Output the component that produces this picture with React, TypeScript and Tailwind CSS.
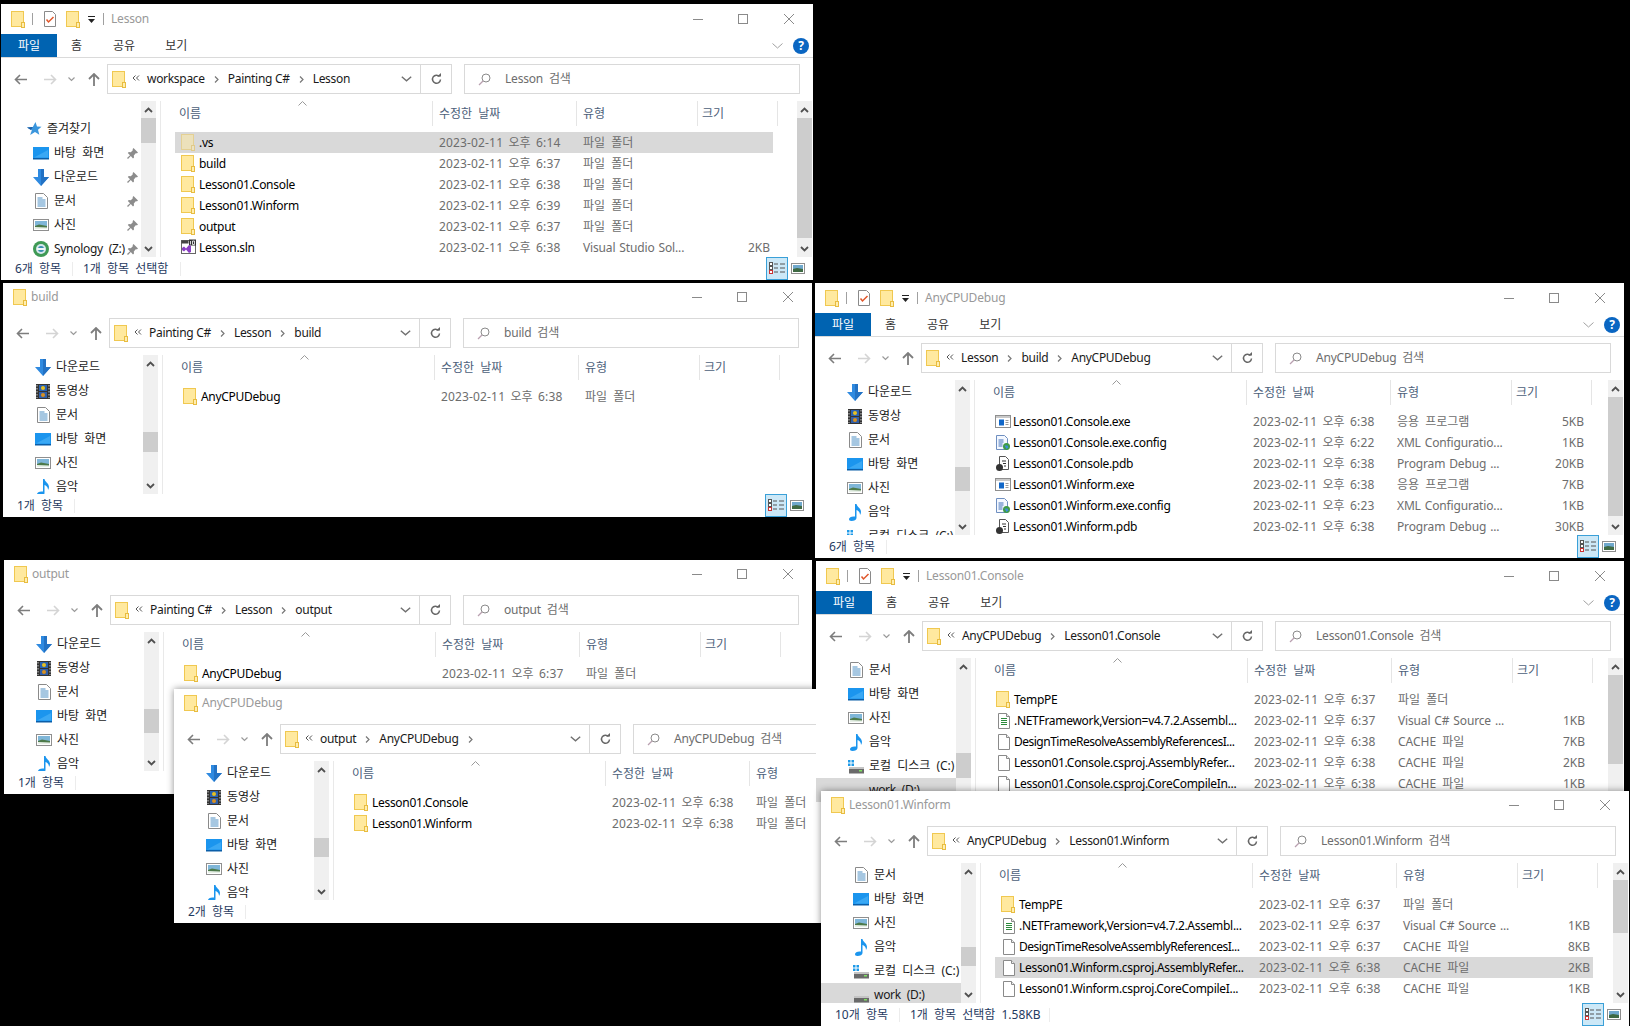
import type { ReactNode } from 'react';

type FileKind = 'folder' | 'hidden' | 'exe' | 'config' | 'pdb' | 'sln' | 'cs' | 'blank';
type NavKind = 'star' | 'desktop' | 'download' | 'doc' | 'photo' | 'video' | 'music' | 'synology' | 'diskC' | 'diskD';

type FileRow = { name: string; date?: string; type?: string; size?: string; kind: FileKind; selected?: boolean; tight?: boolean };
type NavRow = { label: string; kind: NavKind; pinned?: boolean; top?: boolean; selected?: boolean };

type WindowProps = {
  place: string;
  title: string;
  ribbon?: boolean;
  crumbs: string[];
  trailing?: boolean;
  search: string;
  nav: NavRow[];
  navShift: string;
  navThumb: [number, number];
  rows: FileRow[];
  listThumb?: [number, number];
  status: string;
  statusWidth?: string;
  status2?: string;
  status2Width?: string;
  raised?: boolean;
};

// latin strings run a bit narrower than Noto Sans in the reference
const latin = (s: string) => (/[가-힣]/.test(s) ? '' : 'tracking-[-0.3px]');
const latinType = (s: string) => (/[가-힣]/.test(s) ? '' : 'tracking-[-0.15px] [word-spacing:1px]');

const Folder = ({ faded }: { faded?: boolean }) => (
  <svg width="14" height="17" viewBox="0 0 14 17" className={faded ? 'shrink-0 opacity-50' : 'shrink-0'}>
    <rect x="0.5" y="0.5" width="12" height="15" fill="#ffe99f" stroke="#f0c850" />
    <rect x="10.5" y="11.5" width="3" height="5" fill="#ffeeb0" stroke="#e8bc40" />
  </svg>
);

const Page = ({ children }: { children?: ReactNode }) => (
  <svg width="16" height="18" viewBox="0 0 16 18" className="shrink-0">
    <path d="M2.5 1.5h8l3 3v12h-11z" fill="#fff" stroke="#8a8a8a" />
    <path d="M10.5 1.5v3h3" fill="#eee" stroke="#8a8a8a" />
    {children}
  </svg>
);

const FileIcon = ({ kind }: { kind: FileKind }) => {
  if (kind === 'folder') return <Folder />;
  if (kind === 'hidden') return <Folder faded />;
  if (kind === 'blank') return <Page />;
  if (kind === 'cs')
    return (
      <Page>
        <path d="M5 6.5h6M5 8.5h6M5 10.5h6M5 12.5h6" stroke="#2c8a3c" />
      </Page>
    );
  if (kind === 'exe')
    return (
      <svg width="16" height="14" viewBox="0 0 16 14" className="shrink-0">
        <rect x="0.5" y="0.5" width="15" height="12" fill="#fff" stroke="#8f8f8f" />
        <rect x="1" y="1" width="14" height="2" fill="#c9c9c9" />
        <rect x="4" y="4.5" width="5" height="6" fill="#1167c8" />
        <path d="M10.5 5.5h3M10.5 7.5h3M10.5 9.5h3" stroke="#9a9a9a" />
      </svg>
    );
  if (kind === 'config')
    return (
      <svg width="16" height="18" viewBox="0 0 16 18" className="shrink-0">
        <path d="M1.5 1.5h8l3 3v11h-11z" fill="#f4f8ff" stroke="#6f8fc0" />
        <path d="M3.5 6h5M3.5 8h5M3.5 10h4M3.5 12h4" stroke="#3e6fb8" />
        <circle cx="11.5" cy="12.5" r="3.5" fill="#3f9a45" />
        <path d="M9.5 11.5h3l1 2-2 1.5z" fill="#3b8fd8" />
      </svg>
    );
  if (kind === 'pdb')
    return (
      <svg width="16" height="18" viewBox="0 0 16 18" className="shrink-0">
        <path d="M4.5 1.5h6l3 3v10h-9z" fill="#fff" stroke="#555" />
        <path d="M7 6h4M8 8.500h3M9 11h2" stroke="#333" />
        <circle cx="4.500" cy="12.500" r="3.500" fill="#333" />
      </svg>
    );
  return (
    <svg width="16" height="17" viewBox="0 0 16 17" className="shrink-0">
      <rect x="0.500" y="1.500" width="14" height="13" fill="#fff" stroke="#666" />
      <rect x="0.500" y="1.500" width="7" height="3" fill="#444" />
      <rect x="8" y="0.500" width="7" height="6" fill="#333" />
      <path d="M9.500 2v3.500M11.500 2h2v3.500h-2z" stroke="#fff" fill="none" strokeWidth="0.800" />
      <path d="M1 9l2-1.500 2 2 3-3.500 2 1v6l-2 1-3-3.500-2 2-2-1.500z" fill="#8a3fc4" />
    </svg>
  );
};

const NavIcon = ({ kind }: { kind: NavKind }) => {
  switch (kind) {
    case 'star':
      return (
        <svg width="16" height="16" viewBox="0 0 16 16">
          <path d="M9.500 1l1.500 4.500 4.500.3-3.500 3 1.300 5-4.300-2.800-4.800 3 1.800-4.800L1 6.500l5.800-.6z" fill="#3a96dd" />
          <path d="M1 6.500l5.800-.6-2 3 1 .5-2 5 1.800-4.800z" fill="#1d5fa8" />
        </svg>
      );
    case 'desktop':
      return (
        <svg width="16" height="13" viewBox="0 0 16 13">
          <rect width="16" height="12" fill="#1b95ee" />
          <rect x="0" y="11" width="16" height="1.500" fill="#0b5ea8" />
          <path d="M1 10.500L15 3v7.500z" fill="#3aa8f4" />
        </svg>
      );
    case 'download':
      return (
        <svg width="16" height="17" viewBox="0 0 16 17">
          <path d="M5 0h6v8h5l-8 9-8-9h5z" fill="#2f8ae0" />
          <path d="M8 0h3v8h5l-8 9z" fill="#2372c4" />
        </svg>
      );
    case 'doc':
      return (
        <svg width="13" height="16" viewBox="0 0 13 16">
          <path d="M.5.500h8l4 4v11H.500z" fill="#fff" stroke="#8a8a8a" />
          <path d="M2.500 5h5M2.500 7h8M2.500 9h8M2.500 11h8M2.500 13h8" stroke="#4c8fc4" />
        </svg>
      );
    case 'photo':
      return (
        <svg width="16" height="13" viewBox="0 0 16 13">
          <rect x="0.500" y="0.500" width="15" height="11" fill="#fff" stroke="#8f8f8f" />
          <rect x="2" y="2" width="12" height="8" fill="#7fb6d8" />
          <path d="M2 7l4-1.500 8 1.500v3H2z" fill="#4d7a4a" />
          <path d="M2 8l12 .5V10H2z" fill="#e6efe6" />
        </svg>
      );
    case 'video':
      return (
        <svg width="14" height="15" viewBox="0 0 14 15">
          <rect width="14" height="15" fill="#333" />
          <path d="M1 1v13M13 1v13" stroke="#ccc" strokeDasharray="1.500 1.500" />
          <rect x="3" y="1" width="8" height="6" fill="#2a62b0" />
          <rect x="3" y="8" width="8" height="6" fill="#315fa8" />
          <circle cx="7" cy="4" r="2" fill="#e8c020" />
          <circle cx="7" cy="11" r="2" fill="#d89020" />
        </svg>
      );
    case 'music':
      return (
        <svg width="13" height="17" viewBox="0 0 13 17">
          <path d="M6 0h1.500c.3 3 4.500 4 4.500 8 0 1-.3 2-1 3 .2-3-2-4.500-3.500-5v8c0 2-2.500 3-5 3C.500 17 0 16 0 15c0-1.500 2.500-3 6-2.500z" fill="#1b95ee" />
        </svg>
      );
    case 'synology':
      return (
        <svg width="16" height="16" viewBox="0 0 16 16">
          <circle cx="8" cy="8" r="8" fill="#3f9a55" />
          <circle cx="8" cy="8" r="5" fill="#d7e6ee" />
          <circle cx="8" cy="8" r="3" fill="#3a8fb0" />
          <rect x="4" y="7" width="8" height="2" fill="#f0f6f8" />
        </svg>
      );
    case 'diskC':
      return (
        <svg width="16" height="15" viewBox="0 0 16 15">
          <path d="M0 1h2.500v2.500H0zM3.500 1H6v2.500H3.500zM0 4.500h2.500V7H0zM3.500 4.500H6V7H3.500z" fill="#1e9ae8" />
          <rect x="1" y="9" width="15" height="5.500" fill="#6a6a6a" />
          <rect x="1" y="8" width="15" height="2" fill="#c4c4c4" />
          <rect x="11" y="11" width="3" height="1.500" fill="#7fe060" />
        </svg>
      );
    default:
      return (
        <svg width="16" height="15" viewBox="0 0 16 15">
          <rect x="1" y="9" width="15" height="5.500" fill="#6a6a6a" />
          <rect x="1" y="8" width="15" height="2" fill="#c4c4c4" />
          <rect x="11" y="11" width="3" height="1.500" fill="#7fe060" />
        </svg>
      );
  }
};

const Pin = () => (
  <svg width="11" height="11" viewBox="0 0 11 11" className="absolute left-[126px] top-[7px]">
    <path d="M6.500 0L11 4.500 9.800 5.500 9 5 6.800 7.500 7 9.500 6 10.500 3.800 8 1 11 0 10l3-2.800L.800 5l1-1 2 .2L6 2l-.500-.800z" fill="#8c8c8c" />
  </svg>
);

const Caret = ({ up }: { up?: boolean }) => (
  <svg width="9" height="6" viewBox="0 0 9 6">
    <path d={up ? 'M1 5l3.500-3.500L8 5' : 'M1 1l3.500 3.500L8 1'} fill="none" stroke="#505050" strokeWidth="1.800" />
  </svg>
);

const ScrollBar = ({ thumb }: { thumb: [number, number] }) => (
  <div className="flex h-full w-[15px] shrink-0 flex-col bg-[#f0f0f0]">
    <div className="flex h-[17px] shrink-0 items-center justify-center">
      <Caret up />
    </div>
    <div className="min-h-0 flex-1">
      <div className="bg-[#cdcdcd]" style={{ marginTop: thumb[0], height: thumb[1] }} />
    </div>
    <div className="flex h-[17px] shrink-0 items-center justify-center">
      <Caret />
    </div>
  </div>
);

const WinControls = () => (
  <div className="ml-auto flex items-center">
    <svg width="10" height="10" viewBox="0 0 10 10" className="mr-[35px]">
      <path d="M0 5.500h10" stroke="#8a8a8a" />
    </svg>
    <svg width="10" height="10" viewBox="0 0 10 10" className="mr-[36px]">
      <rect x="0.500" y="0.500" width="9" height="9" fill="none" stroke="#8a8a8a" />
    </svg>
    <svg width="10" height="10" viewBox="0 0 10 10" className="mr-[19px]">
      <path d="M0 0l10 10M10 0L0 10" stroke="#8a8a8a" />
    </svg>
  </div>
);

const QuickAccess = () => (
  <div className="flex items-center">
    <Folder />
    <div className="ml-[7px] mr-[11px] h-[12px] w-px bg-[#a0a0a0]" />
    <svg width="12" height="16" viewBox="0 0 12 16">
      <path d="M.5.500h8l3 3v12H.500z" fill="#fff" stroke="#8a8a8a" />
      <path d="M2.500 8.500l2 2.500 5-5" fill="none" stroke="#e0562a" strokeWidth="1.500" />
    </svg>
    <div className="ml-[10px]">
      <Folder />
    </div>
    <svg width="7" height="7" viewBox="0 0 7 7" className="ml-[8px]">
      <path d="M0 0h7v1H0zM0 3h7L3.500 7z" fill="#222" />
    </svg>
    <div className="ml-[8px] mr-[7px] h-[12px] w-px bg-[#a0a0a0]" />
  </div>
);

const Ribbon = () => (
  <div className="flex h-[24px] shrink-0 items-stretch border-b border-[#dadada] text-[#333]">
    <div className="flex h-[23px] w-[56px] items-center justify-center bg-[#0063b1] text-white">파일</div>
    <div className="ml-[14px] flex h-[23px] items-center">홈</div>
    <div className="ml-[31px] flex h-[23px] items-center">공유</div>
    <div className="ml-[30px] flex h-[23px] items-center">보기</div>
    <div className="ml-auto flex h-[23px] items-center">
      <svg width="11" height="6" viewBox="0 0 11 6" className="mr-[10px]">
        <path d="M.5.500l5 4.500 5-4.500" fill="none" stroke="#a0a0a0" />
      </svg>
      <div className="mr-[4px] flex h-[16px] w-[16px] items-center justify-center rounded-full bg-[#0a66c2] text-[12px] font-bold text-white">
        ?
      </div>
    </div>
  </div>
);

const Crumb = () => (
  <svg width="5" height="7" viewBox="0 0 5 7" className="mx-[9px] shrink-0">
    <path d="M1 .500l3 3-3 3" fill="none" stroke="#777" strokeWidth="1.200" />
  </svg>
);

const AddressRow = ({ crumbs, trailing, search }: Pick<WindowProps, 'crumbs' | 'trailing' | 'search'>) => (
  <div className="flex h-[30px] shrink-0 items-stretch">
    <div className="flex w-[106px] shrink-0 items-center">
      <svg width="13" height="11" viewBox="0 0 13 11" className="ml-[13px]">
        <path d="M6 1L1.500 5.500 6 10M2 5.500h11" fill="none" stroke="#7d7d7d" strokeWidth="1.600" />
      </svg>
      <svg width="13" height="11" viewBox="0 0 13 11" className="ml-[17px]">
        <path d="M7 1l4.500 4.500L7 10M11 5.500H0" fill="none" stroke="#d4d4d4" strokeWidth="1.600" />
      </svg>
      <svg width="7" height="5" viewBox="0 0 7 5" className="ml-[11px]">
        <path d="M.5.500l3 3 3-3" fill="none" stroke="#9a9a9a" strokeWidth="1.200" />
      </svg>
      <svg width="12" height="13" viewBox="0 0 12 13" className="ml-[13px]">
        <path d="M6 1v12M1 6l5-5 5 5" fill="none" stroke="#7d7d7d" strokeWidth="1.800" />
      </svg>
    </div>
    <div className="flex min-w-0 flex-1 items-center border border-[#d9d9d9]">
      <div className="ml-[4px]">
        <Folder />
      </div>
      <svg width="8" height="6" viewBox="0 0 8 6" className="ml-[6px] mr-[7px] mb-[3px] shrink-0">
        <path d="M3.500.500L1 3l2.500 2.500M7 .500L4.500 3 7 5.500" fill="none" stroke="#555" />
      </svg>
      <div className="flex items-center whitespace-nowrap tracking-[-0.3px] text-[#1a1a1a] [word-spacing:0px]">
        {crumbs.map((c, i) => (
          <div key={c} className="flex items-center">
            {i > 0 && <Crumb />}
            {c}
          </div>
        ))}
        {trailing && <Crumb />}
      </div>
      <svg width="11" height="6" viewBox="0 0 11 6" className="ml-auto mr-[8px] shrink-0">
        <path d="M.8.800l4.700 4 4.700-4" fill="none" stroke="#707070" strokeWidth="1.400" />
      </svg>
      <div className="flex h-full w-[31px] shrink-0 items-center justify-center border-l border-[#d9d9d9]">
        <svg width="11" height="12" viewBox="0 0 11 12">
          <path d="M8.500 3.500a4 4 0 1 0 1 3" fill="none" stroke="#666" strokeWidth="1.500" />
          <path d="M6 3.500h4V0z" fill="#666" />
        </svg>
      </div>
    </div>
    <div className="ml-[12px] mr-[13px] flex w-[336px] shrink-0 items-center border border-[#d9d9d9] tracking-[-0.2px] text-[#6d6d6d]">
      <svg width="13" height="13" viewBox="0 0 13 13" className="ml-[13px] mr-[14px]">
        <circle cx="8" cy="5" r="4" fill="none" stroke="#8a8a8a" />
        <path d="M5 8l-4 4" stroke="#b9a0b0" strokeWidth="1.300" />
      </svg>
      {search}
    </div>
  </div>
);

const Sidebar = ({ nav, navShift, navThumb }: Pick<WindowProps, 'nav' | 'navShift' | 'navThumb'>) => (
  <div className="flex h-full w-[155px] shrink-0">
    <div className="h-full w-[140px] shrink-0 overflow-hidden">
      <div className={navShift}>
        {nav.map((n) => (
          <div
            key={n.label}
            className={`relative flex h-[24px] items-center whitespace-nowrap text-[#1a1a1a] ${n.selected ? 'bg-[#d9d9d9]' : ''}`}
          >
            <div className={`flex w-[16px] shrink-0 justify-center ${n.top ? 'ml-[25px]' : 'ml-[32px]'}`}>
              <NavIcon kind={n.kind} />
            </div>
            <span className={`ml-[5px] ${latin(n.label)}`}>{n.label}</span>
            {n.pinned && <Pin />}
          </div>
        ))}
      </div>
    </div>
    <ScrollBar thumb={navThumb} />
  </div>
);

const ListHeader = () => (
  <div className="relative flex h-[25px] shrink-0 items-stretch text-[#4c607a]">
    <div className="flex w-[271px] items-center pl-[18px]">이름</div>
    <div className="flex w-[144px] items-center border-l border-[#e5e5e5] pl-[6px]">수정한 날짜</div>
    <div className="flex w-[121px] items-center border-l border-[#e5e5e5] pl-[6px]">유형</div>
    <div className="flex w-[81px] items-center border-x border-[#e5e5e5] pl-[4px]">크기</div>
    <svg width="9" height="5" viewBox="0 0 9 5" className="absolute left-[137px] top-0">
      <path d="M.5 4.500l4-4 4 4" fill="none" stroke="#9a9a9a" />
    </svg>
  </div>
);

const ListRow = ({ row }: { row: FileRow }) => (
  <div
    className={`ml-[14px] flex h-[21px] w-[598px] shrink-0 items-center whitespace-nowrap text-[#6d6d6d] ${row.selected ? 'bg-[#d9d9d9]' : ''}`}
  >
    <div className="flex w-[264px] shrink-0 items-center pl-[6px] text-black">
      <div className="flex w-[18px] shrink-0">
        <FileIcon kind={row.kind} />
      </div>
      <span className={row.tight ? 'tracking-[-0.5px]' : 'tracking-[-0.3px]'}>{row.name}</span>
    </div>
    <div className="w-[144px] shrink-0 tracking-[0.15px] [word-spacing:2px]">{row.date}</div>
    <div className={`w-[120px] shrink-0 ${latinType(row.type ?? '')}`}>{row.type}</div>
    <div className="w-[67px] shrink-0 text-right">{row.size}</div>
  </div>
);

const StatusBar = ({ status, statusWidth, status2, status2Width }: Pick<WindowProps, 'status' | 'statusWidth' | 'status2' | 'status2Width'>) => (
  <div className="flex h-[23px] shrink-0 items-center text-[#1f3a5f]">
    <div className={`ml-[14px] ${statusWidth ?? 'w-[57px]'}`}>{status}</div>
    <div className="h-[14px] w-px bg-[#ececec]" />
    {status2 && (
      <>
        <div className={`pl-[10px] ${status2Width}`}>{status2}</div>
        <div className="h-[14px] w-px bg-[#ececec]" />
      </>
    )}
    <div className="ml-auto flex h-full items-stretch">
      <div className="flex w-[22px] items-center justify-center border border-[#3aa0d8] bg-[#cce8f7]">
        <svg width="16" height="13" viewBox="0 0 16 13">
          <rect x="0.500" y="0.500" width="3" height="3" fill="#fff" stroke="#555" />
          <rect x="0.500" y="4.500" width="3" height="3" fill="#fff" stroke="#555" />
          <rect x="0.500" y="8.500" width="3" height="3" fill="#fff" stroke="#c33" />
          <path d="M5 2h4M11 2h5M5 6h4M11 6h5M5 10h4M11 10h5" stroke="#555" />
        </svg>
      </div>
      <div className="ml-[3px] mr-[8px] flex items-center">
        <svg width="14" height="11" viewBox="0 0 14 11">
          <rect x="0.500" y="0.500" width="13" height="10" fill="#fff" stroke="#8f8f8f" />
          <rect x="2" y="2" width="10" height="7" fill="#6fa8cc" />
          <path d="M2 6l4-1 6 1v3H2z" fill="#3f6a44" />
        </svg>
      </div>
    </div>
  </div>
);

const ExplorerWindow = (p: WindowProps) => (
  <div
    className={`absolute flex flex-col overflow-hidden bg-white text-[12px] leading-[16px] [word-spacing:3px] [font-family:'Noto_Sans','Noto_Sans_CJK_KR',sans-serif] ${p.place} ${p.raised ? 'shadow-[0_0_7px_rgba(0,0,0,0.45)]' : ''}`}
  >
    {p.ribbon ? (
      <>
        <div className="flex h-[30px] shrink-0 items-center pl-[10px]">
          <QuickAccess />
          <span className="tracking-[-0.2px] text-[#999]">{p.title}</span>
          <WinControls />
        </div>
        <Ribbon />
        <div className="h-[6px] shrink-0" />
      </>
    ) : (
      <div className="flex h-[35px] shrink-0 items-center pb-[7px] pl-[10px]">
        <Folder />
        <span className="ml-[4px] tracking-[-0.2px] text-[#999]">{p.title}</span>
        <WinControls />
      </div>
    )}
    <AddressRow crumbs={p.crumbs} trailing={p.trailing} search={p.search} />
    <div className="h-[7px] shrink-0" />
    <div className="flex min-h-0 flex-1">
      <Sidebar nav={p.nav} navShift={p.navShift} navThumb={p.navThumb} />
      <div className="ml-[4px] h-full w-px shrink-0 bg-[#e9e9e9]" />
      <div className="flex min-w-0 flex-1 flex-col overflow-hidden">
        <ListHeader />
        <div className="h-[6px] shrink-0" />
        {p.rows.map((r) => (
          <ListRow key={r.name} row={r} />
        ))}
      </div>
      {p.listThumb && (
        <div className="mr-[1px] h-full">
          <ScrollBar thumb={p.listThumb} />
        </div>
      )}
    </div>
    <StatusBar status={p.status} statusWidth={p.statusWidth} status2={p.status2} status2Width={p.status2Width} />
  </div>
);

const folderType = '파일 폴더';
const cache = 'CACHE 파일';
const day = '2023-02-11 오후 ';

const libNav: NavRow[] = [
  { label: '다운로드', kind: 'download' },
  { label: '동영상', kind: 'video' },
  { label: '문서', kind: 'doc' },
  { label: '바탕 화면', kind: 'desktop' },
  { label: '사진', kind: 'photo' },
  { label: '음악', kind: 'music' },
  { label: '로컬 디스크 (C:)', kind: 'diskC' },
];

const shortNav = libNav.slice(0, 6);

const driveNav: NavRow[] = [
  { label: '문서', kind: 'doc' },
  { label: '바탕 화면', kind: 'desktop' },
  { label: '사진', kind: 'photo' },
  { label: '음악', kind: 'music' },
  { label: '로컬 디스크 (C:)', kind: 'diskC' },
  { label: 'work (D:)', kind: 'diskD', selected: true },
];

const windows: WindowProps[] = [
  {
    place: 'left-[1px] top-[4px] h-[276px] w-[812px]',
    title: 'Lesson',
    ribbon: true,
    crumbs: ['workspace', 'Painting C#', 'Lesson'],
    search: 'Lesson 검색',
    nav: [
      { label: '즐겨찾기', kind: 'star', top: true },
      { label: '바탕 화면', kind: 'desktop', pinned: true },
      { label: '다운로드', kind: 'download', pinned: true },
      { label: '문서', kind: 'doc', pinned: true },
      { label: '사진', kind: 'photo', pinned: true },
      { label: 'Synology (Z:)', kind: 'synology', pinned: true },
    ],
    navShift: 'mt-[16px]',
    navThumb: [0, 25],
    rows: [
      { name: '.vs', date: day + '6:14', type: folderType, kind: 'hidden', selected: true },
      { name: 'build', date: day + '6:37', type: folderType, kind: 'folder' },
      { name: 'Lesson01.Console', date: day + '6:38', type: folderType, kind: 'folder' },
      { name: 'Lesson01.Winform', date: day + '6:39', type: folderType, kind: 'folder' },
      { name: 'output', date: day + '6:37', type: folderType, kind: 'folder' },
      { name: 'Lesson.sln', date: day + '6:38', type: 'Visual Studio Sol...', size: '2KB', kind: 'sln' },
    ],
    listThumb: [0, 120],
    status: '6개 항목',
    status2: '1개 항목 선택함',
    status2Width: 'w-[107px]',
  },
  {
    place: 'left-[3px] top-[283px] h-[234px] w-[809px]',
    title: 'build',
    crumbs: ['Painting C#', 'Lesson', 'build'],
    search: 'build 검색',
    nav: shortNav,
    navShift: 'mt-0',
    navThumb: [60, 20],
    rows: [{ name: 'AnyCPUDebug', date: day + '6:38', type: folderType, kind: 'folder' }],
    status: '1개 항목',
  },
  {
    place: 'left-[815px] top-[283px] h-[275px] w-[809px]',
    title: 'AnyCPUDebug',
    ribbon: true,
    crumbs: ['Lesson', 'build', 'AnyCPUDebug'],
    search: 'AnyCPUDebug 검색',
    nav: libNav,
    navShift: 'mt-0',
    navThumb: [70, 24],
    rows: [
      { name: 'Lesson01.Console.exe', date: day + '6:38', type: '응용 프로그램', size: '5KB', kind: 'exe' },
      { name: 'Lesson01.Console.exe.config', date: day + '6:22', type: 'XML Configuratio...', size: '1KB', kind: 'config' },
      { name: 'Lesson01.Console.pdb', date: day + '6:38', type: 'Program Debug ...', size: '20KB', kind: 'pdb' },
      { name: 'Lesson01.Winform.exe', date: day + '6:38', type: '응용 프로그램', size: '7KB', kind: 'exe' },
      { name: 'Lesson01.Winform.exe.config', date: day + '6:23', type: 'XML Configuratio...', size: '1KB', kind: 'config' },
      { name: 'Lesson01.Winform.pdb', date: day + '6:38', type: 'Program Debug ...', size: '30KB', kind: 'pdb' },
    ],
    listThumb: [0, 119],
    status: '6개 항목',
  },
  {
    place: 'left-[4px] top-[560px] h-[234px] w-[808px]',
    title: 'output',
    crumbs: ['Painting C#', 'Lesson', 'output'],
    search: 'output 검색',
    nav: shortNav,
    navShift: 'mt-0',
    navThumb: [60, 24],
    rows: [{ name: 'AnyCPUDebug', date: day + '6:37', type: folderType, kind: 'folder' }],
    status: '1개 항목',
  },
  {
    place: 'left-[174px] top-[689px] h-[234px] w-[808px]',
    title: 'AnyCPUDebug',
    crumbs: ['output', 'AnyCPUDebug'],
    trailing: true,
    search: 'AnyCPUDebug 검색',
    nav: shortNav,
    navShift: 'mt-0',
    navThumb: [60, 19],
    rows: [
      { name: 'Lesson01.Console', date: day + '6:38', type: folderType, kind: 'folder' },
      { name: 'Lesson01.Winform', date: day + '6:38', type: folderType, kind: 'folder' },
    ],
    status: '2개 항목',
    raised: true,
  },
  {
    place: 'left-[816px] top-[561px] h-[275px] w-[808px]',
    title: 'Lesson01.Console',
    ribbon: true,
    crumbs: ['AnyCPUDebug', 'Lesson01.Console'],
    search: 'Lesson01.Console 검색',
    nav: driveNav,
    navShift: 'mt-0',
    navThumb: [78, 25],
    rows: [
      { name: 'TempPE', date: day + '6:37', type: folderType, kind: 'folder' },
      { name: '.NETFramework,Version=v4.7.2.Assembl...', date: day + '6:37', type: 'Visual C# Source ...', size: '1KB', kind: 'cs' },
      { name: 'DesignTimeResolveAssemblyReferencesI...', date: day + '6:38', type: cache, size: '7KB', kind: 'blank', tight: true },
      { name: 'Lesson01.Console.csproj.AssemblyRefer...', date: day + '6:38', type: cache, size: '2KB', kind: 'blank' },
      { name: 'Lesson01.Console.csproj.CoreCompileIn...', date: day + '6:38', type: cache, size: '1KB', kind: 'blank' },
    ],
    listThumb: [0, 89],
    status: '5개 항목',
  },
  {
    place: 'left-[821px] top-[791px] h-[235px] w-[808px]',
    title: 'Lesson01.Winform',
    crumbs: ['AnyCPUDebug', 'Lesson01.Winform'],
    search: 'Lesson01.Winform 검색',
    nav: driveNav,
    navShift: 'mt-0',
    navThumb: [67, 19],
    rows: [
      { name: 'TempPE', date: day + '6:37', type: folderType, kind: 'folder' },
      { name: '.NETFramework,Version=v4.7.2.Assembl...', date: day + '6:37', type: 'Visual C# Source ...', size: '1KB', kind: 'cs' },
      { name: 'DesignTimeResolveAssemblyReferencesI...', date: day + '6:37', type: cache, size: '8KB', kind: 'blank', tight: true },
      { name: 'Lesson01.Winform.csproj.AssemblyRefer...', date: day + '6:38', type: cache, size: '2KB', kind: 'blank', selected: true },
      { name: 'Lesson01.Winform.csproj.CoreCompileI...', date: day + '6:38', type: cache, size: '1KB', kind: 'blank' },
    ],
    listThumb: [0, 53],
    status: '10개 항목',
    statusWidth: 'w-[64px]',
    status2: '1개 항목 선택함 1.58KB',
    status2Width: 'w-[149px]',
    raised: true,
  },
];

export default function App() {
  return (
    <div className="relative h-[1026px] w-[1630px] overflow-hidden bg-black">
      {windows.map((w) => (
        <ExplorerWindow key={w.place} {...w} />
      ))}
    </div>
  );
}
